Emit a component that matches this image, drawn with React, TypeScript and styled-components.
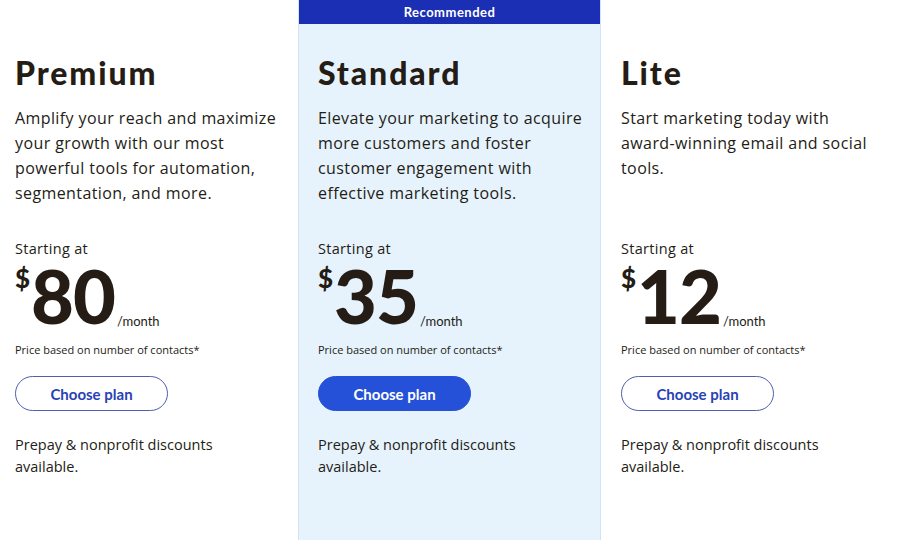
import React from "react";
import styled, { createGlobalStyle } from "styled-components";

const GlobalStyle = createGlobalStyle`
  html, body {
    margin: 0;
    padding: 0;
    background: #ffffff;
  }
  body {
    font-family: "Open Sans", "Lato", sans-serif;
    color: #241c15;
  }
`;

const Board = styled.div`
  display: grid;
  grid-template-columns: 298px 303px 299px;
  width: 900px;
  height: 540px;
  overflow: hidden;
  background: #ffffff;
`;

const Column = styled.section<{ $featured?: boolean; $pad: number }>`
  display: flex;
  flex-direction: column;
  padding: 0 12px 0 ${(p) => p.$pad}px;
  background: ${(p) => (p.$featured ? "#e6f3fd" : "#ffffff")};
  border-left: ${(p) => (p.$featured ? "1px solid #d3e3f1" : "none")};
  border-right: ${(p) => (p.$featured ? "1px solid #d3e3f1" : "none")};
  box-sizing: border-box;
`;

const Banner = styled.div<{ $visible?: boolean }>`
  height: 24px;
  margin: 0 -12px 0 -19px;
  background: ${(p) => (p.$visible ? "#1a2fb3" : "transparent")};
  color: #ffffff;
  font-family: "Lato", sans-serif;
  font-size: 13px;
  font-weight: 700;
  letter-spacing: 0.5px;
  line-height: 24px;
  text-align: center;
`;

const Title = styled.h2`
  margin: 30px 0 0;
  font-family: "Lato", sans-serif;
  font-size: 32px;
  font-weight: 900;
  line-height: 38px;
  color: #241c15;
  letter-spacing: 1.9px;
`;

const Description = styled.p`
  margin: 14px 0 0;
  height: 100px;
  font-size: 16px;
  line-height: 25px;
  letter-spacing: 0.4px;
  color: #241c15;
  white-space: nowrap;
`;

const Starting = styled.div`
  margin-top: 34px;
  font-size: 14.5px;
  line-height: 18px;
  letter-spacing: 0.3px;
  color: #241c15;
`;

const PriceRow = styled.div`
  display: flex;
  align-items: flex-start;
  height: 66px;
  margin-top: 7px;
  font-family: "Lato", sans-serif;
`;

const Currency = styled.span`
  font-size: 26px;
  font-weight: 900;
  line-height: 26px;
  margin-top: 0px;
`;

const Amount = styled.span`
  font-size: 74px;
  font-weight: 900;
  line-height: 62px;
  letter-spacing: -1px;
  margin-left: 1px;
`;

const Per = styled.span`
  align-self: flex-end;
  font-size: 13px;
  line-height: 16px;
  margin-left: 2px;
  margin-bottom: 2px;
`;

const Note = styled.div`
  margin-top: 12px;
  font-size: 11px;
  line-height: 14px;
  color: #241c15;
`;

const PlanButton = styled.button<{ $primary?: boolean }>`
  margin-top: 19px;
  width: 153px;
  height: 35px;
  border-radius: 18px;
  border: 1px solid ${(p) => (p.$primary ? "#2451d8" : "#4f5fae")};
  background: ${(p) => (p.$primary ? "#2451d8" : "#ffffff")};
  color: ${(p) => (p.$primary ? "#ffffff" : "#2742b5")};
  font-family: "Lato", sans-serif;
  font-size: 15px;
  font-weight: 700;
  cursor: pointer;
  box-sizing: border-box;
`;

const Footer = styled.p`
  margin: 23px 0 0;
  font-size: 14.5px;
  line-height: 22px;
  color: #241c15;
  white-space: nowrap;
`;

type Plan = {
  name: string;
  lines: string[];
  price: string;
  featured?: boolean;
  pad: number;
};

const plans: Plan[] = [
  {
    name: "Premium",
    lines: [
      "Amplify your reach and maximize",
      "your growth with our most",
      "powerful tools for automation,",
      "segmentation, and more.",
    ],
    price: "80",
    pad: 15,
  },
  {
    name: "Standard",
    lines: [
      "Elevate your marketing to acquire",
      "more customers and foster",
      "customer engagement with",
      "effective marketing tools.",
    ],
    price: "35",
    featured: true,
    pad: 19,
  },
  {
    name: "Lite",
    lines: [
      "Start marketing today with",
      "award-winning email and social",
      "tools.",
    ],
    price: "12",
    pad: 20,
  },
];

export default function App() {
  return (
    <>
      <GlobalStyle />
      <Board>
        {plans.map((plan) => (
          <Column key={plan.name} $featured={plan.featured} $pad={plan.pad}>
            <Banner $visible={plan.featured}>
              {plan.featured ? "Recommended" : ""}
            </Banner>
            <Title>{plan.name}</Title>
            <Description>
              {plan.lines.map((line, i) => (
                <React.Fragment key={i}>
                  {line}
                  {i < plan.lines.length - 1 && <br />}
                </React.Fragment>
              ))}
            </Description>
            <Starting>Starting at</Starting>
            <PriceRow>
              <Currency>$</Currency>
              <Amount>{plan.price}</Amount>
              <Per>/month</Per>
            </PriceRow>
            <Note>Price based on number of contacts*</Note>
            <PlanButton $primary={plan.featured}>Choose plan</PlanButton>
            <Footer>
              Prepay &amp; nonprofit discounts
              <br />
              available.
            </Footer>
          </Column>
        ))}
      </Board>
    </>
  );
}
